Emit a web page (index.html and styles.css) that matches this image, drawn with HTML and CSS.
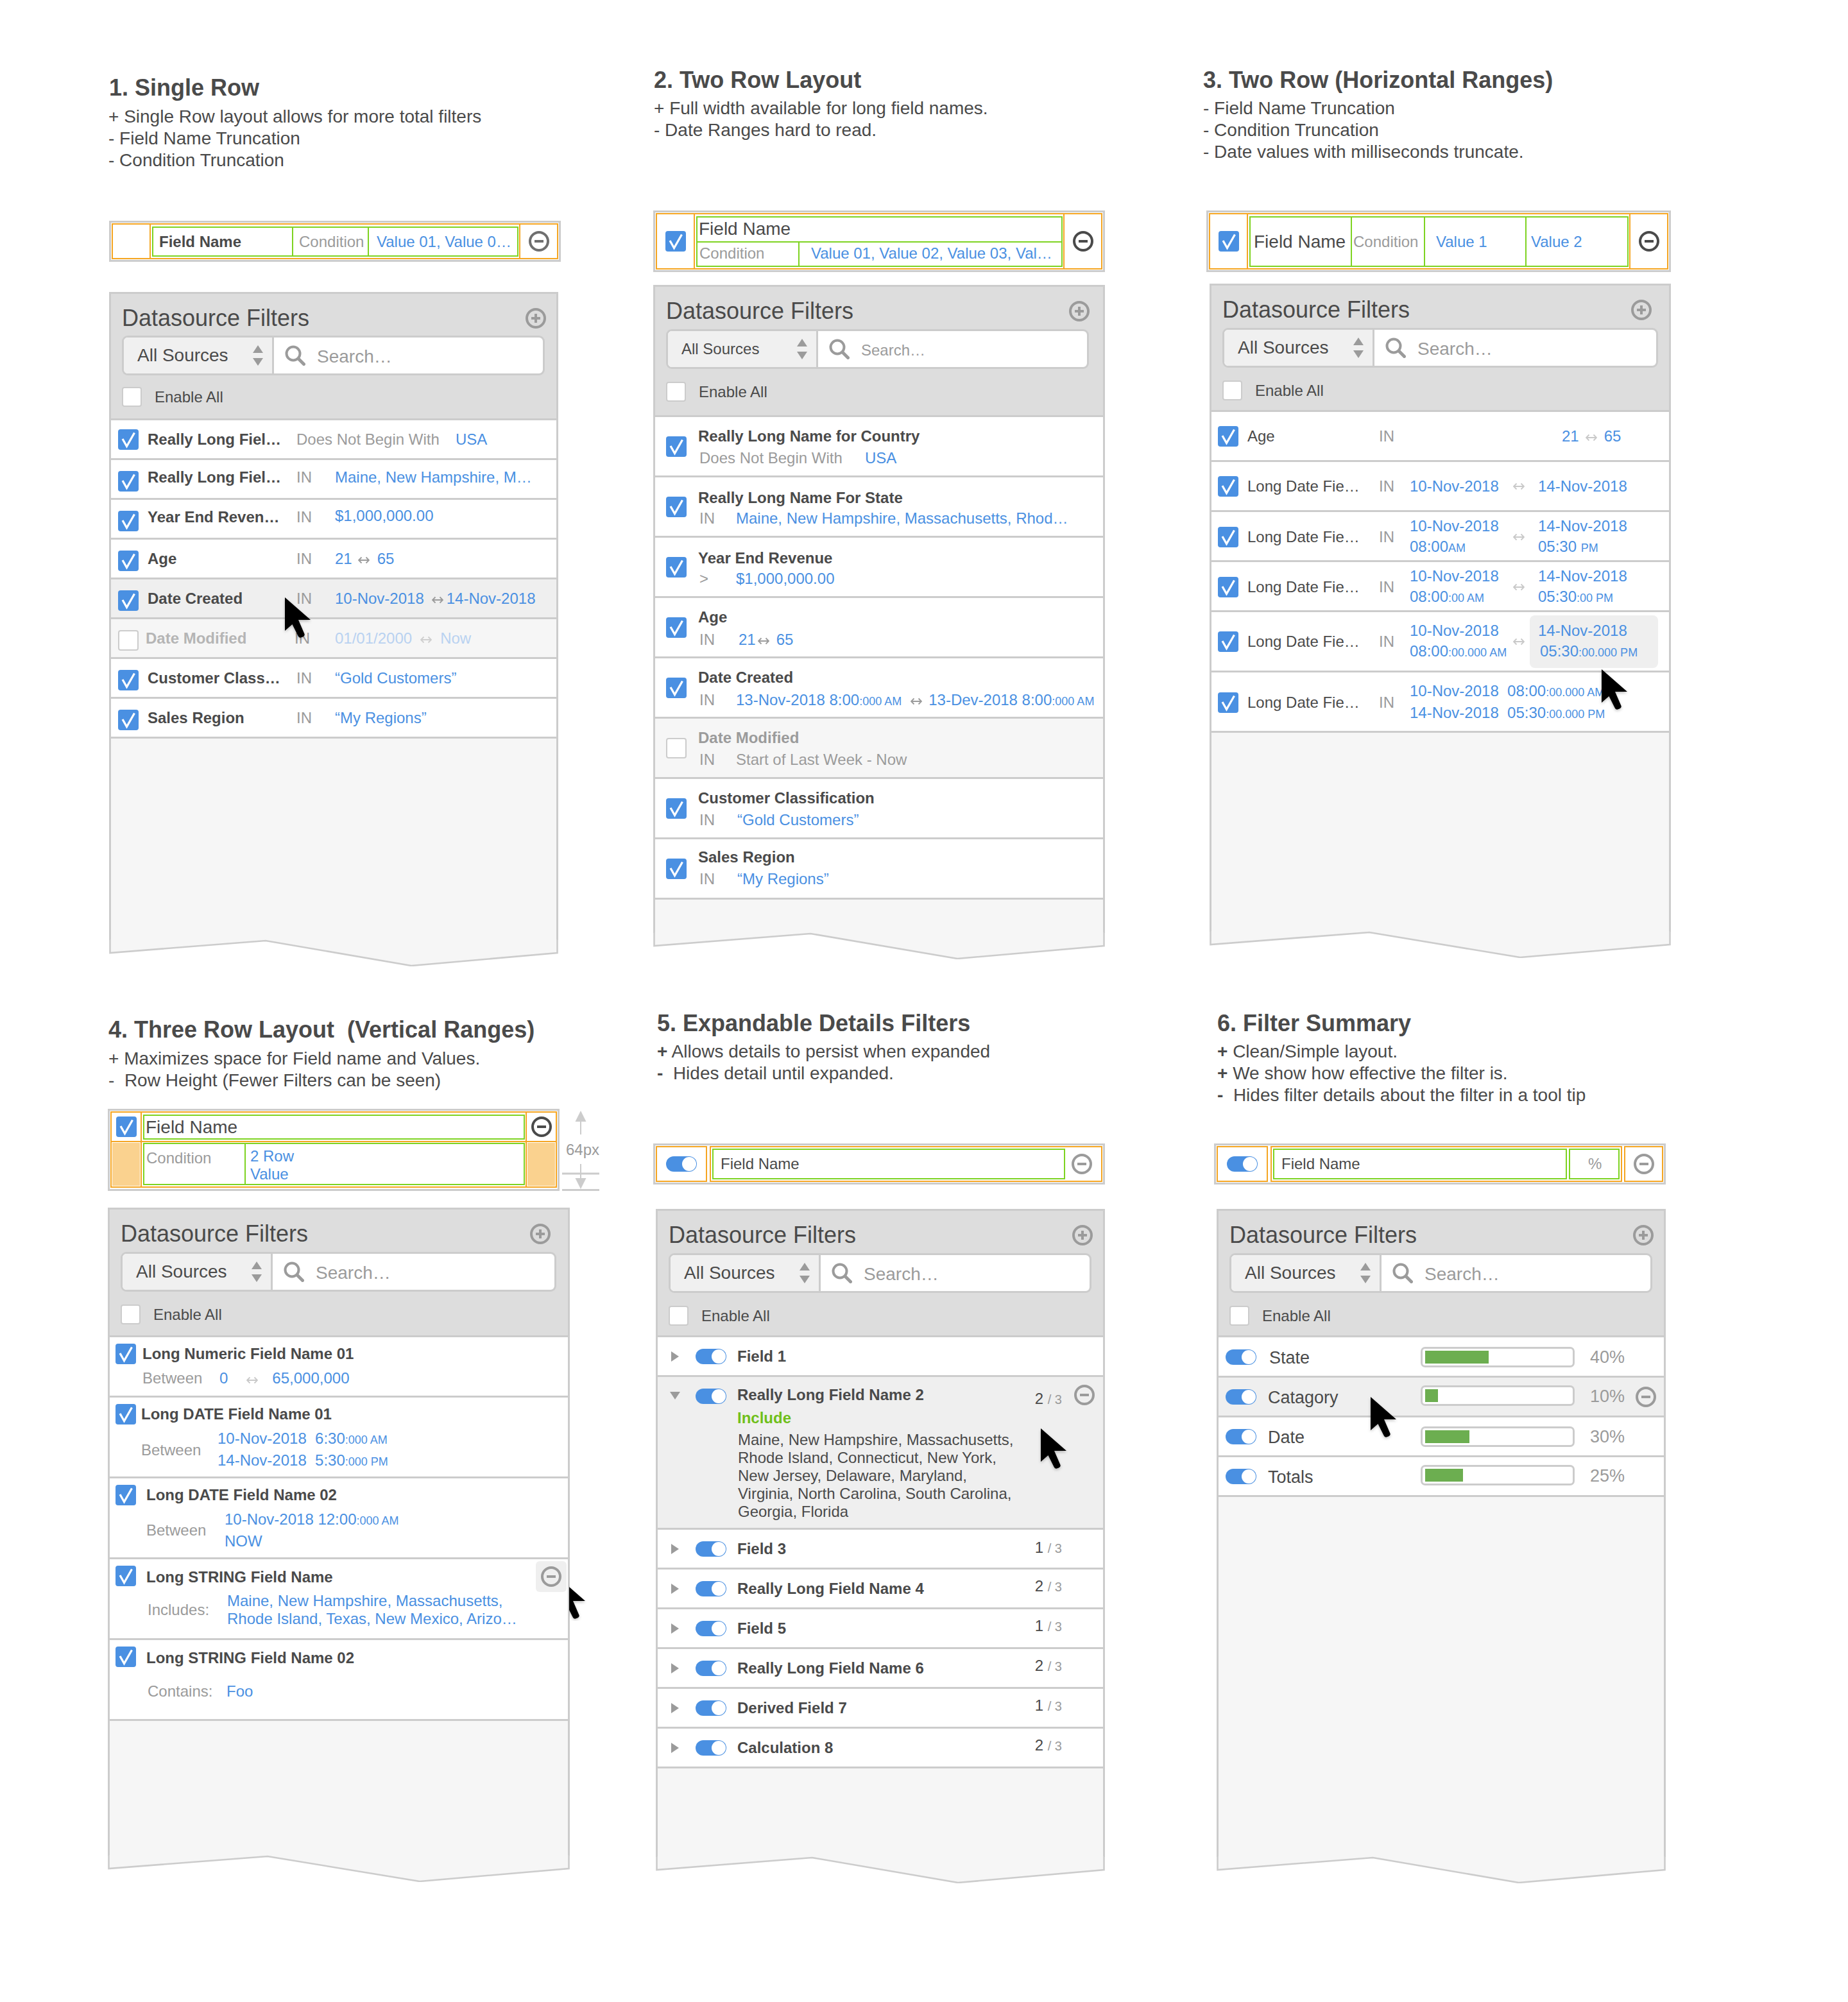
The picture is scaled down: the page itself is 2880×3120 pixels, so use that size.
FILE: index.html
```html
<!DOCTYPE html>
<html lang="en">
<head>
    <meta charset="UTF-8">
    <title>Datasource Filters - row layouts</title>
    <link rel="stylesheet" href="styles.css">
</head>
<body>

<svg class="defs" width="0" height="0">
    <symbol id="check" viewBox="0 0 32 32">
        <rect width="32" height="32" rx="4" fill="#4a90e2"/>
        <path d="M7 15 L13.5 26.5 L25.5 5.5" fill="none" stroke="#fff" stroke-width="3.2"/>
    </symbol>
    <symbol id="minus" viewBox="0 0 32 32">
        <circle cx="16" cy="16" r="14" fill="none" stroke="currentColor" stroke-width="4"/>
        <path d="M9 16 H23" stroke="currentColor" stroke-width="4"/>
    </symbol>
    <symbol id="plus" viewBox="0 0 32 32">
        <circle cx="16" cy="16" r="14" fill="none" stroke="currentColor" stroke-width="4"/>
        <path d="M9 16 H23 M16 9 V23" stroke="currentColor" stroke-width="4"/>
    </symbol>
    <symbol id="search" viewBox="0 0 32 32">
        <circle cx="13" cy="13" r="10.5" fill="none" stroke="#9b9b9b" stroke-width="4"/>
        <path d="M21 21 L29.5 29.5" stroke="#9b9b9b" stroke-width="5" stroke-linecap="round"/>
    </symbol>
    <symbol id="updown" viewBox="0 0 16 32">
        <path d="M8 0 L16 12 H0 Z M0 20 H16 L8 32 Z" fill="#9b9b9b"/>
    </symbol>
    <symbol id="arr" viewBox="0 0 18 12">
        <path d="M1 6 H17 M5.5 1.5 L1 6 L5.5 10.5 M12.5 1.5 L17 6 L12.5 10.5" fill="none" stroke="currentColor" stroke-width="1.8"/>
    </symbol>
    <symbol id="cursor" viewBox="0 0 42 66">
        <path d="M0 0 L40 35 L21 35 L30.5 57 Q31.5 60 28 61.5 L25 62.5 Q22 63.5 20.5 60 L11.5 42 L0 52 Z" fill="#000"/>
    </symbol>
</svg>

<main class="board">

    <!-- 1 -->
    <section class="mock s1">
        <div class="intro">
            <h2>1. Single Row</h2>
            <p class="notes">+ Single Row layout allows for more total filters<br>- Field Name Truncation<br>- Condition Truncation</p>
        </div>
        <div class="spec">
            <div class="cell c-side"></div>
            <div class="cell c-main">
                <div class="zone">
                    <div class="part pf1 strong">Field Name</div>
                    <div class="part pc1 grey">Condition</div>
                    <div class="part pv1 blue">Value 01, Value 0…</div>
                </div>
            </div>
            <div class="cell c-side c-end"><svg class="ic ic-mid"><use href="#minus"/></svg></div>
        </div>
        <div class="panel">
            <div class="head">
                <div class="head-top"><span class="title">Datasource Filters</span><svg class="ic ic-light"><use href="#plus"/></svg></div>
                <div class="ctl">
                    <div class="sel">All Sources<svg class="updown"><use href="#updown"/></svg></div>
                    <div class="find"><svg class="mag"><use href="#search"/></svg>Search…</div>
                </div>
                <div class="enable"><span class="box"></span>Enable All</div>
            </div>
            <div class="rows">
                <div class="row r1"><svg class="chk"><use href="#check"/></svg><b class="nm">Really Long Fiel…</b><span class="lbl wide">Does Not Begin With</span><span class="blue">USA</span></div>
                <div class="row r1 low"><svg class="chk"><use href="#check"/></svg><b class="nm lift">Really Long Fiel…</b><span class="lbl lift">IN</span><span class="blue lift">Maine, New Hampshire, M…</span></div>
                <div class="row r1 low"><svg class="chk"><use href="#check"/></svg><b class="nm lift">Year End Reven…</b><span class="lbl lift">IN</span><span class="blue lift2">$1,000,000.00</span></div>
                <div class="row r1 low"><svg class="chk"><use href="#check"/></svg><b class="nm">Age</b><span class="lbl">IN</span><span class="blue">21<svg class="arr arr-r1"><use href="#arr"/></svg>65</span></div>
                <div class="row r1 low hov"><svg class="chk"><use href="#check"/></svg><b class="nm">Date Created</b><span class="lbl">IN</span><span class="blue">10-Nov-2018<svg class="arr arr-tight"><use href="#arr"/></svg>14-Nov-2018</span></div>
                <div class="row r1 low off"><span class="box"></span><b class="nm nm-off">Date Modified</b><span class="lbl">IN</span><span class="faint">01/01/2000<svg class="arr"><use href="#arr"/></svg>Now</span></div>
                <div class="row r1 low"><svg class="chk"><use href="#check"/></svg><b class="nm">Customer Class…</b><span class="lbl">IN</span><span class="blue">“Gold Customers”</span></div>
                <div class="row r1 low"><svg class="chk"><use href="#check"/></svg><b class="nm">Sales Region</b><span class="lbl">IN</span><span class="blue">“My Regions”</span></div>
            </div>
            <svg class="tear" width="700" height="42"><path d="M1.5 0 V21 L244 2 L471 41 L698.5 21 V0" /></svg>
            <svg class="cur cur1"><use href="#cursor"/></svg>
        </div>
    </section>

    <!-- 2 -->
    <section class="mock s2">
        <div class="intro">
            <h2>2. Two Row Layout</h2>
            <p class="notes">+ Full width available for long field names.<br>- Date Ranges hard to read.</p>
        </div>
        <div class="spec">
            <div class="cell c-side"><svg class="chk"><use href="#check"/></svg></div>
            <div class="cell c-main">
                <div class="zone zone-col">
                    <div class="part pname">Field Name</div>
                    <div class="sub">
                        <div class="part pc2 grey">Condition</div>
                        <div class="part pv2 blue">Value 01, Value 02, Value 03, Val…</div>
                    </div>
                </div>
            </div>
            <div class="cell c-side c-end"><svg class="ic ic-dark"><use href="#minus"/></svg></div>
        </div>
        <div class="panel">
            <div class="head">
                <div class="head-top"><span class="title">Datasource Filters</span><svg class="ic ic-light"><use href="#plus"/></svg></div>
                <div class="ctl">
                    <div class="sel">All Sources<svg class="updown"><use href="#updown"/></svg></div>
                    <div class="find"><svg class="mag"><use href="#search"/></svg>Search…</div>
                </div>
                <div class="enable"><span class="box"></span>Enable All</div>
            </div>
            <div class="rows">
                <div class="row r2">
                    <svg class="chk"><use href="#check"/></svg>
                    <div class="stack"><b>Really Long Name for Country</b><div class="line"><span class="lbl wide">Does Not Begin With</span><span class="blue">USA</span></div></div>
                </div>
                <div class="row r2 name-lo">
                    <svg class="chk"><use href="#check"/></svg>
                    <div class="stack"><b>Really Long Name For State</b><div class="line"><span class="lbl">IN</span><span class="blue">Maine, New Hampshire, Massachusetts, Rhod…</span></div></div>
                </div>
                <div class="row r2 name-lo">
                    <svg class="chk"><use href="#check"/></svg>
                    <div class="stack"><b>Year End Revenue</b><div class="line"><span class="lbl">&gt;</span><span class="blue">$1,000,000.00</span></div></div>
                </div>
                <div class="row r2">
                    <svg class="chk"><use href="#check"/></svg>
                    <div class="stack"><b>Age</b><div class="line line-lo"><span class="lbl">IN</span><span class="blue in4">21<svg class="arr arr-close"><use href="#arr"/></svg>65</span></div></div>
                </div>
                <div class="row r2">
                    <svg class="chk"><use href="#check"/></svg>
                    <div class="stack"><b>Date Created</b><div class="line line-lo"><span class="lbl">IN</span><span class="blue">13-Nov-2018 8:00<small>:000 AM</small><svg class="arr arr-date"><use href="#arr"/></svg>13-Dev-2018 8:00<small>:000 AM</small></span></div></div>
                </div>
                <div class="row r2 off">
                    <span class="box"></span>
                    <div class="stack"><b class="nm-off2">Date Modified</b><div class="line"><span class="lbl">IN</span><span class="grey">Start of Last Week - Now</span></div></div>
                </div>
                <div class="row r2">
                    <svg class="chk"><use href="#check"/></svg>
                    <div class="stack"><b>Customer Classification</b><div class="line"><span class="lbl">IN</span><span class="blue in2">“Gold Customers”</span></div></div>
                </div>
                <div class="row r2 all-hi">
                    <svg class="chk"><use href="#check"/></svg>
                    <div class="stack"><b>Sales Region</b><div class="line"><span class="lbl">IN</span><span class="blue in2">“My Regions”</span></div></div>
                </div>
            </div>
            <svg class="tear" width="704" height="42"><path d="M1.5 0 V21 L245 2 L474 41 L702.5 21 V0" /></svg>
        </div>
    </section>

    <!-- 3 -->
    <section class="mock s3">
        <div class="intro">
            <h2>3. Two Row (Horizontal Ranges)</h2>
            <p class="notes">- Field Name Truncation<br>- Condition Truncation<br>- Date values with milliseconds truncate.</p>
        </div>
        <div class="spec">
            <div class="cell c-side"><svg class="chk"><use href="#check"/></svg></div>
            <div class="cell c-main">
                <div class="zone">
                    <div class="part pf3">Field Name</div>
                    <div class="part pc3 grey">Condition</div>
                    <div class="part pv3 blue">Value 1</div>
                    <div class="part pv3b blue">Value 2</div>
                </div>
            </div>
            <div class="cell c-side c-end"><svg class="ic ic-dark"><use href="#minus"/></svg></div>
        </div>
        <div class="panel">
            <div class="head">
                <div class="head-top"><span class="title">Datasource Filters</span><svg class="ic ic-light"><use href="#plus"/></svg></div>
                <div class="ctl">
                    <div class="sel">All Sources<svg class="updown"><use href="#updown"/></svg></div>
                    <div class="find"><svg class="mag"><use href="#search"/></svg>Search…</div>
                </div>
                <div class="enable"><span class="box"></span>Enable All</div>
            </div>
            <div class="rows">
                <div class="row r3"><svg class="chk"><use href="#check"/></svg><span class="nm">Age</span><span class="lbl">IN</span><span class="v1"></span><span class="gap gap-age blue">21<svg class="arr arr-age"><use href="#arr"/></svg>65</span></div>
                <div class="row r3"><svg class="chk"><use href="#check"/></svg><span class="nm">Long Date Fie…</span><span class="lbl">IN</span><span class="v1 blue">10-Nov-2018</span><svg class="arr"><use href="#arr"/></svg><span class="v2 blue">14-Nov-2018</span></div>
                <div class="row r3 dn"><svg class="chk"><use href="#check"/></svg><span class="nm">Long Date Fie…</span><span class="lbl">IN</span><span class="v1 blue">10-Nov-2018<br>08:00<small>AM</small></span><svg class="arr"><use href="#arr"/></svg><span class="v2 blue">14-Nov-2018<br>05:30 <small>PM</small></span></div>
                <div class="row r3 dn"><svg class="chk"><use href="#check"/></svg><span class="nm">Long Date Fie…</span><span class="lbl">IN</span><span class="v1 blue">10-Nov-2018<br>08:00<small>:00 AM</small></span><svg class="arr"><use href="#arr"/></svg><span class="v2 blue">14-Nov-2018<br>05:30<small>:00 PM</small></span></div>
                <div class="row r3 tall"><svg class="chk"><use href="#check"/></svg><span class="nm">Long Date Fie…</span><span class="lbl">IN</span><span class="v1 blue">10-Nov-2018<br>08:00<small>:00.000 AM</small></span><svg class="arr"><use href="#arr"/></svg><span class="v2 blue pick">14-Nov-2018<br><i>05:30<small>:00.000 PM</small></i></span></div>
                <div class="row r3 tall dn"><svg class="chk"><use href="#check"/></svg><span class="nm">Long Date Fie…</span><span class="lbl">IN</span><span class="blue">10-Nov-2018&nbsp; 08:00<small>:00.000 AM</small><br>14-Nov-2018&nbsp; 05:30<small>:00.000 PM</small></span></div>
            </div>
            <svg class="tear" width="719" height="42"><path d="M1.5 0 V21 L249 2 L484 41 L717.5 21 V0" /></svg>
            <svg class="cur cur3"><use href="#cursor"/></svg>
        </div>
    </section>

    <!-- 4 -->
    <section class="mock s4">
        <div class="intro">
            <h2>4. Three Row Layout&nbsp; (Vertical Ranges)</h2>
            <p class="notes">+ Maximizes space for Field name and Values.<br>-&nbsp; Row Height (Fewer Filters can be seen)</p>
        </div>
        <div class="spec-wrap">
            <div class="spec spec-rows">
                <div class="tier t-top">
                    <div class="cell c-side"><svg class="chk"><use href="#check"/></svg></div>
                    <div class="cell c-main"><div class="zone"><div class="part pname">Field Name</div></div></div>
                    <div class="cell c-side c-end"><svg class="ic ic-dark"><use href="#minus"/></svg></div>
                </div>
                <div class="tier t-bot">
                    <div class="cell c-side"><span class="peach"></span></div>
                    <div class="cell c-main">
                        <div class="zone">
                            <div class="part pc4 grey">Condition</div>
                            <div class="part pv4 blue">2 Row<br>Value</div>
                        </div>
                    </div>
                    <div class="cell c-side c-end"><span class="peach"></span></div>
                </div>
            </div>
            <div class="dim">
                <svg width="58" height="41"><path d="M29 3 L37.5 20 H20.5 Z" fill="#ccc"/><path d="M29 20 V40" stroke="#ccc" stroke-width="2"/></svg>
                <span class="dim-text">64px</span>
                <svg width="58" height="42"><path d="M29 0 V23" stroke="#ccc" stroke-width="2"/><path d="M29 39 L37.5 22 H20.5 Z" fill="#ccc"/><path d="M0 15 H58 M0 40.5 H58" stroke="#ccc" stroke-width="3"/></svg>
            </div>
        </div>
        <div class="panel">
            <div class="head">
                <div class="head-top"><span class="title">Datasource Filters</span><svg class="ic ic-light"><use href="#plus"/></svg></div>
                <div class="ctl">
                    <div class="sel">All Sources<svg class="updown"><use href="#updown"/></svg></div>
                    <div class="find"><svg class="mag"><use href="#search"/></svg>Search…</div>
                </div>
                <div class="enable"><span class="box"></span>Enable All</div>
            </div>
            <div class="rows">
                <div class="row r4 short">
                    <svg class="chk"><use href="#check"/></svg>
                    <div class="stack st-a"><b>Long Numeric Field Name 01</b><div class="detail"><span class="lbl">Between</span><span class="blue">0<svg class="arr arr-wide"><use href="#arr"/></svg>65,000,000</span></div></div>
                </div>
                <div class="row r4">
                    <svg class="chk"><use href="#check"/></svg>
                    <div class="stack st-b"><b>Long DATE Field Name 01</b><div class="detail"><span class="lbl">Between</span><span class="blue">10-Nov-2018&nbsp; 6:30<small>:000 AM</small><br>14-Nov-2018&nbsp; 5:30<small>:000 PM</small></span></div></div>
                </div>
                <div class="row r4">
                    <svg class="chk"><use href="#check"/></svg>
                    <div class="stack st-c"><b>Long DATE Field Name 02</b><div class="detail"><span class="lbl">Between</span><span class="blue">10-Nov-2018 12:00<small>:000 AM</small><br>NOW</span></div></div>
                </div>
                <div class="row r4">
                    <svg class="chk"><use href="#check"/></svg>
                    <div class="stack st-c deep"><b>Long STRING Field Name</b><div class="detail"><span class="lbl lbl-in">Includes:</span><span class="blue tight">Maine, New Hampshire, Massachusetts,<br>Rhode Island, Texas, New Mexico, Arizo…</span></div></div>
                    <span class="hover-btn"><svg class="ic ic-light"><use href="#minus"/></svg></span>
                </div>
                <div class="row r4">
                    <svg class="chk"><use href="#check"/></svg>
                    <div class="stack st-c deep"><b>Long STRING Field Name 02</b><div class="detail low-detail"><span class="lbl lbl-in">Contains:</span><span class="blue">Foo</span></div></div>
                </div>
            </div>
            <svg class="tear" width="720" height="42"><path d="M1.5 0 V21 L249 2 L486 41 L718.5 21 V0" /></svg>
            <svg class="cur cur4"><use href="#cursor"/></svg>
        </div>
    </section>

    <!-- 5 -->
    <section class="mock s5">
        <div class="intro">
            <h2>5. Expandable Details Filters</h2>
            <p class="notes"><b>+</b> Allows details to persist when expanded<br><b>-</b>&nbsp; Hides detail until expanded.</p>
        </div>
        <div class="spec spec-tog">
            <div class="cell c-tog"><span class="toggle"></span></div>
            <div class="cell c-rest">
                <div class="zone z-five"><div class="part ptog">Field Name</div></div>
                <svg class="ic ic-light"><use href="#minus"/></svg>
            </div>
        </div>
        <div class="panel">
            <div class="head">
                <div class="head-top"><span class="title">Datasource Filters</span><svg class="ic ic-light"><use href="#plus"/></svg></div>
                <div class="ctl">
                    <div class="sel">All Sources<svg class="updown"><use href="#updown"/></svg></div>
                    <div class="find"><svg class="mag"><use href="#search"/></svg>Search…</div>
                </div>
                <div class="enable"><span class="box"></span>Enable All</div>
            </div>
            <div class="rows">
                <div class="row r5"><span class="tri"></span><span class="toggle"></span><b class="nm5">Field 1</b></div>
                <div class="row r5 open">
                    <span class="tri tri-down"></span><span class="toggle"></span>
                    <div class="stack5">
                        <b class="nm5">Really Long Field Name 2</b>
                        <b class="incl">Include</b>
                        <p class="states">Maine, New Hampshire, Massachusetts,<br>Rhode Island, Connecticut, New York,<br>New Jersey, Delaware, Maryland,<br>Virginia, North Carolina, South Carolina,<br>Georgia, Florida</p>
                    </div>
                    <span class="count">2 <small>/ 3</small></span>
                    <svg class="ic ic-light"><use href="#minus"/></svg>
                </div>
                <div class="row r5 level"><span class="tri"></span><span class="toggle"></span><b class="nm5">Field 3</b><span class="count">1 <small>/ 3</small></span></div>
                <div class="row r5"><span class="tri"></span><span class="toggle"></span><b class="nm5">Really Long Field Name 4</b><span class="count">2 <small>/ 3</small></span></div>
                <div class="row r5"><span class="tri"></span><span class="toggle"></span><b class="nm5">Field 5</b><span class="count">1 <small>/ 3</small></span></div>
                <div class="row r5"><span class="tri"></span><span class="toggle"></span><b class="nm5">Really Long Field Name 6</b><span class="count">2 <small>/ 3</small></span></div>
                <div class="row r5"><span class="tri"></span><span class="toggle"></span><b class="nm5">Derived Field 7</b><span class="count">1 <small>/ 3</small></span></div>
                <div class="row r5"><span class="tri"></span><span class="toggle"></span><b class="nm5">Calculation 8</b><span class="count">2 <small>/ 3</small></span></div>
            </div>
            <svg class="tear" width="700" height="42"><path d="M1.5 0 V21 L243.5 2 L471 41 L698.5 21 V0" /></svg>
            <svg class="cur cur5"><use href="#cursor"/></svg>
        </div>
    </section>

    <!-- 6 -->
    <section class="mock s6">
        <div class="intro">
            <h2>6. Filter Summary</h2>
            <p class="notes"><b>+</b> Clean/Simple layout.<br><b>+</b> We show how effective the filter is.<br><b>-</b>&nbsp; Hides filter details about the filter in a tool tip</p>
        </div>
        <div class="spec spec-tog">
            <div class="cell c-tog"><span class="toggle"></span></div>
            <div class="cell c-six">
                <div class="zone z-six-a"><div class="part ptog">Field Name</div></div>
                <div class="zone z-six-b"><div class="part ppct grey">%</div></div>
            </div>
            <div class="cell c-six-end"><svg class="ic ic-light"><use href="#minus"/></svg></div>
        </div>
        <div class="panel">
            <div class="head">
                <div class="head-top"><span class="title">Datasource Filters</span><svg class="ic ic-light"><use href="#plus"/></svg></div>
                <div class="ctl">
                    <div class="sel">All Sources<svg class="updown"><use href="#updown"/></svg></div>
                    <div class="find"><svg class="mag"><use href="#search"/></svg>Search…</div>
                </div>
                <div class="enable"><span class="box"></span>Enable All</div>
            </div>
            <div class="rows">
                <div class="row r6"><span class="toggle"></span><span class="nm6">State</span><span class="bar"><i class="fill" style="width: 99px"></i></span><span class="pct">40%</span></div>
                <div class="row r6 hov"><span class="toggle"></span><span class="nm6 nudge">Catagory</span><span class="bar bar-up"><i class="fill" style="width: 20px"></i></span><span class="pct pct-level">10%</span><svg class="ic ic-light"><use href="#minus"/></svg></div>
                <div class="row r6"><span class="toggle"></span><span class="nm6 nudge">Date</span><span class="bar"><i class="fill" style="width: 69px"></i></span><span class="pct">30%</span></div>
                <div class="row r6"><span class="toggle"></span><span class="nm6 nudge">Totals</span><span class="bar bar-up"><i class="fill" style="width: 59px"></i></span><span class="pct pct-level">25%</span></div>
            </div>
            <svg class="tear" width="700" height="42"><path d="M1.5 0 V21 L243.5 2 L471 41 L698.5 21 V0" /></svg>
            <svg class="cur cur6"><use href="#cursor"/></svg>
        </div>
    </section>

</main>

</body>
</html>
```

FILE: styles.css
```css
* {
    box-sizing: border-box;
}

body {
    margin: 0;
    background: #fff;
    color: #4a4a4a;
    font-family: "Liberation Sans", Arial, sans-serif;
    font-size: 24px;
}

.defs {
    display: block;
    height: 0;
}

.board {
    display: grid;
    grid-template-columns: 1000px 860px 1020px;
    grid-template-rows: 1560px 1560px;
    width: 2880px;
    height: 3120px;
}

h2 {
    margin: 0;
    font-size: 36px;
    line-height: 44px;
}

.notes {
    margin: 5px 0 0;
    font-size: 28px;
    line-height: 34px;
}

.grey { color: #9b9b9b; }
.blue { color: #4a90e2; }
.faint { color: #b9d2f1; }
small { font-size: 18px; }

/* per-mock placement on the board */
.s1 { padding: 115px 0 0 170px; }
.s1 .intro { height: 229px; }
.s1 .notes { margin: 6px 0 0 -1px; }
.s1 .panel { margin-top: 47px; width: 700px; }

.s2 { padding: 103px 0 0 18px; }
.s2 .intro { height: 225px; margin-left: 1px; }
.s2 .panel { margin-top: 20px; width: 704px; }

.s3 { padding: 103px 0 0 15px; }
.s3 .intro { height: 225px; }
.s3 .spec { margin-left: 5px; width: 724px; }
.s3 .panel { margin: 18px 0 0 10px; width: 719px; }

.s4 { padding: 23px 0 0 168px; }
.s4 .intro { height: 145px; margin-left: 1px; }
.s4 .notes { margin-top: 6px; }
.s4 .panel { margin-top: 26px; width: 720px; }

.s5 { padding: 13px 0 0 24px; }
.s5 .intro { height: 209px; }
.s5 .spec { margin-left: -6px; }
.s5 .panel { margin: 38px 0 0 -2px; width: 700px; }

.s6 { padding: 13px 0 0 37px; }
.s6 .intro { height: 209px; }
.s6 .spec { margin-left: -5px; }
.s6 .panel { margin: 38px 0 0 -1px; width: 700px; }

/* annotated row specs */
.spec {
    display: flex;
    width: 704px;
    height: 64px;
    padding: 1px;
    border: 3px solid #ccc;
}

.s2 .spec,
.s3 .spec {
    height: 96px;
}

.cell {
    display: flex;
    align-items: center;
    border: 2px solid #f5a623;
}

.c-side {
    flex: 0 0 61px;
    justify-content: center;
}

.c-main {
    flex: 1;
    align-items: stretch;
    margin-left: -2px;
    padding: 3px 1px 2px 2px;
}

.c-end {
    margin-left: -2px;
}

.zone {
    display: flex;
    flex: 1;
    border: 2px solid #7ed321;
}

.zone-col {
    flex-direction: column;
}

.sub {
    display: flex;
    flex: 1;
    border-top: 2px solid #7ed321;
}

.part {
    display: flex;
    align-items: center;
    white-space: nowrap;
}

.part + .part {
    border-left: 2px solid #7ed321;
}

.pf1 { flex: 0 0 216px; padding-left: 9px; font-weight: bold; }
.pc1 { flex: 0 0 118px; padding-left: 9px; }
.pv1 { flex: 1; padding-left: 12px; }

.pname { padding-left: 2px; font-size: 28px; }
.s2 .pname { height: 37px; padding-bottom: 1px; }
.pc2 { flex: 0 0 157px; padding: 0 0 2px 3px; }
.pv2 { flex: 1; padding: 0 0 2px 18px; }
.sub .part + .part { border-left: 2px solid #7ed321; }

.pf3 { flex: 0 0 156px; padding-left: 5px; font-size: 28px; }
.pc3 { flex: 0 0 114px; padding-left: 2px; }
.pv3 { flex: 0 0 158px; padding-left: 17px; }
.pv3b { flex: 1; padding-left: 7px; }

.spec-rows {
    flex-direction: column;
    height: 128px;
}

.s4 .tier {
    display: flex;
}

.t-top { height: 48px; }
.t-bot { height: 73px; margin-top: -2px; }
.s4 .c-side { flex: 0 0 49px; }
.peach {
    align-self: stretch;
    flex: 1;
    margin: 1px;
    background: #fad28f;
}
.t-bot .c-main { padding-top: 1px; }
.pc4 {
    flex: 0 0 156px;
    align-items: flex-start;
    padding: 8px 0 0 3px;
}
.pv4 {
    flex: 1;
    padding: 3px 0 0 7px;
    line-height: 28px;
    white-space: normal;
}
.s4 .pname { flex: 1; }

.spec-wrap {
    display: flex;
}

.dim {
    display: flex;
    flex-direction: column;
    width: 58px;
    margin-left: 4px;
}

.dim svg {
    display: block;
    flex: none;
}

.dim-text {
    display: flex;
    align-items: center;
    height: 45px;
    padding-left: 6px;
    color: #9b9b9b;
}

.spec-tog {
    height: 64px;
}

.c-tog {
    flex: 0 0 80px;
    justify-content: center;
}

.c-rest {
    flex: 1;
    align-items: stretch;
    margin-left: 4px;
    padding: 2px 0 2px 2px;
}

.c-rest .ic {
    align-self: center;
    margin-left: 10px;
}

.z-five {
    flex: 0 0 550px;
}

.ptog {
    padding-left: 11px;
}

.c-six {
    flex: 0 0 548px;
    align-items: stretch;
    gap: 3px;
    margin-left: 4px;
    padding: 2px;
}

.z-six-a { flex: 0 0 458px; }
.z-six-b { flex: 1; }
.ppct { padding-left: 28px; }

.c-six-end {
    flex: 1;
    justify-content: center;
    margin-left: 3px;
}

/* panels */
.panel {
    position: relative;
    display: flex;
    flex-direction: column;
    height: 1051px;
}

.head {
    flex: none;
    height: 200px;
    padding: 14px 16px 0 17px;
    border: 3px solid #ccc;
    background: #ddd;
}

.s2 .head { height: 206px; }
.s4 .head { height: 202px; }
.s1 .head-top { height: 51px; }
.s1 .enable { margin-top: 18px; }

.head-top {
    display: flex;
    align-items: flex-start;
    justify-content: space-between;
    height: 52px;
}

.head-top .ic {
    margin-top: 8px;
}

.s3 .head-top,
.s4 .head-top {
    padding-right: 11px;
}

.s2 .head-top {
    padding-right: 5px;
}

.title {
    padding-top: 2px;
    font-size: 36px;
    line-height: 44px;
}

.ctl {
    display: flex;
    width: 659px;
    height: 62px;
    overflow: hidden;
    border: 3px solid #ccc;
    border-radius: 9px;
    background: #fff;
    font-size: 28px;
}

.s3 .ctl,
.s4 .ctl {
    width: 679px;
}

.s2 .ctl {
    font-size: 24px;
}

.sel {
    display: flex;
    flex: 0 0 234px;
    align-items: center;
    padding-left: 21px;
    border-right: 3px solid #ccc;
    background: #f0f0f0;
}

.updown {
    flex: none;
    width: 16px;
    height: 32px;
    margin: 0 14px 0 auto;
}

.find {
    display: flex;
    align-items: center;
    padding: 3px 0 0 17px;
    color: #9b9b9b;
}

.mag {
    width: 32px;
    height: 32px;
    margin: -3px 18px 0 0;
}

.enable {
    display: flex;
    align-items: center;
    gap: 20px;
    margin-top: 20px;
    padding-left: 2px;
}

.box {
    flex: none;
    width: 32px;
    height: 32px;
    border: 2px solid #ccc;
    border-radius: 4px;
    background: #fff;
}

.enable .box {
    width: 31px;
    height: 31px;
    margin-left: -2px;
}

.chk {
    display: block;
    flex: none;
    width: 32px;
    height: 32px;
}

.ic {
    display: block;
    flex: none;
    width: 32px;
    height: 32px;
}

.ic-dark { color: #4a4a4a; }
.ic-mid { color: #6f6f6f; }
.ic-light { color: #9b9b9b; }

.rows {
    flex: 1;
    border-right: 3px solid #ccc;
    border-left: 3px solid #ccc;
    background: #f6f6f6;
}

.row {
    position: relative;
    display: flex;
    align-items: center;
    border-bottom: 3px solid #ccc;
    background: #fff;
}

.hov { background: #efefef; }
.off { background: #f6f6f6; }

.tear {
    display: block;
    flex: none;
    margin-top: -1px;
}

.tear path {
    fill: #f6f6f6;
    stroke: #ccc;
    stroke-width: 2.6;
}

.arr {
    display: inline-block;
    width: 18px;
    height: 12px;
    margin: 0 13px;
    color: #9b9b9b;
    vertical-align: 0;
}

.cur {
    position: absolute;
    width: 42px;
    height: 66px;
    filter: drop-shadow(0 2px 2px rgba(0, 0, 0, .25));
}

.cur1 { left: 274px; top: 476px; }
.cur3 { left: 611px; top: 601px; }
.cur4 { left: 704px; top: 578px; clip-path: inset(0 0 0 15px); }
.cur5 { left: 600px; top: 342px; }
.cur6 { left: 240px; top: 293px; }

/* 1: one line rows */
.r1 {
    height: 62px;
    padding-left: 11px;
}

.r1 .nm {
    flex: 0 0 232px;
    margin-left: 14px;
    white-space: nowrap;
}

.r1 .lbl {
    flex: 0 0 60px;
    color: #9b9b9b;
}

.r1 .wide { flex: 0 0 248px; }
.r1.low .chk,
.r1.low .box { margin-top: 7px; }
.lift { margin-top: -5px; }
.lift2 { margin-top: -9px; }
.arr-r1 { margin: 0 12px 0 9px; }
.arr-tight { margin: 0 5px 0 12px; }
.off .nm-off { margin-left: 11px; flex-basis: 232px; color: #b5b5b5; }
.off .faint { margin-left: 3px; }
.off .arr { color: #cfcfcf; }

/* 2: two line rows */
.r2 {
    align-items: center;
    height: 94px;
    padding-left: 17px;
}

.stack {
    align-self: flex-start;
    padding: 16px 0 0 18px;
    white-space: nowrap;
}

.stack b {
    display: block;
    line-height: 28px;
}

.name-lo .stack b { margin-top: 2px; }
.name-lo .line { margin-top: 1px; }
.line-lo { padding-top: 1px; }
.all-hi .stack { padding-top: 14px; }

.line {
    display: flex;
    margin-top: 3px;
    line-height: 34px;
}

.line .lbl {
    flex: 0 0 59px;
    padding-left: 2px;
    color: #9b9b9b;
}

.line .wide { flex: 0 0 260px; }
.in4 { margin-left: 4px; }
.in2 { margin-left: 2px; }
.arr-close { margin: 0 11px 0 3px; }
.arr-date { margin: 0 10px 0 14px; }
.nm-off2 { color: #9b9b9b; }

/* 3: horizontal ranges */
.r3 {
    height: 78px;
    padding-left: 10px;
    line-height: 32px;
}

.tall { height: 94px; }
.dn { padding-top: 3px; }

.r3 .nm {
    flex: 0 0 205px;
    margin-left: 14px;
    white-space: nowrap;
}

.r3 .lbl {
    flex: 0 0 48px;
    color: #9b9b9b;
}

.r3 .v1 { flex: 0 0 161px; white-space: nowrap; }
.r3 .arr { flex: none; margin: 0 21px 0 0; color: #c9c9c9; }
.r3 .v2 { flex: none; white-space: nowrap; }
.gap-age { margin-left: 76px; }
.r3 .arr-age { margin: 0 11px 0 10px; vertical-align: 0; }
.pick {
    width: 200px;
    margin-left: -13px;
    padding: 8px 0 8px 13px;
    border-radius: 8px;
    background: #efefef;
}
.pick i { margin-left: 3px; font-style: normal; }
.r3 .blue { white-space: nowrap; }

/* 4: vertical ranges */
.r4 {
    align-items: flex-start;
    height: 126px;
    padding: 10px 0 0 9px;
}

.short { height: 94px; }

.r4 .stack { padding: 2px 0 0 0; }
.st-a { margin-left: 10px; }
.st-b { margin-left: 8px; }
.st-c { margin-left: 16px; }
.r4 .deep { padding-top: 4px; }

.detail {
    display: flex;
    align-items: center;
    margin-top: 8px;
    line-height: 32px;
}

.detail .lbl {
    flex: 0 0 119px;
    color: #9b9b9b;
}

.st-a .lbl { flex-basis: 120px; }
.st-c .lbl { flex-basis: 122px; }
.st-c .lbl-in { flex-basis: 123px; margin-left: 2px; }
.deep .detail { margin-top: 9px; }
.tight { line-height: 28px; margin-left: 1px; }
.deep .low-detail { margin-top: 22px; }
.arr-wide { margin: 0 22px 0 29px; color: #c9c9c9; }
.r4 .detail .arr { vertical-align: -1px; }

.hover-btn {
    position: absolute;
    top: 3px;
    right: 2px;
    display: flex;
    align-items: center;
    justify-content: center;
    width: 48px;
    height: 48px;
    border-radius: 6px;
    background: #efefef;
}

/* 5: expandable rows */
.r5 {
    height: 62px;
    padding-left: 21px;
}

.tri {
    flex: none;
    width: 0;
    height: 0;
    margin-right: 26px;
    border-top: 8px solid transparent;
    border-bottom: 8px solid transparent;
    border-left: 12px solid #9b9b9b;
}

.tri-down {
    margin: 23px 24px 0 -2px;
    border-top: 12px solid #9b9b9b;
    border-right: 8px solid transparent;
    border-bottom: 0;
    border-left: 8px solid transparent;
}

.toggle {
    display: flex;
    flex: none;
    justify-content: flex-end;
    width: 48px;
    height: 24px;
    padding: 1px;
    border-radius: 12px;
    background: #4a90e2;
}

.toggle::after {
    content: "";
    width: 22px;
    height: 22px;
    border-radius: 50%;
    background: #fff;
}

.nm5 {
    margin-left: 17px;
    white-space: nowrap;
}

.count {
    margin: 0 64px 8px auto;
    white-space: nowrap;
}

.level .count { margin-bottom: 3px; }
.count small { font-size: 20px; color: #9b9b9b; }

.open {
    align-items: flex-start;
    height: 238px;
    background: #efefef;
}

.open .toggle { margin-top: 18px; }

.stack5 {
    display: flex;
    flex-direction: column;
    padding-top: 14px;
}

.stack5 b { line-height: 28px; }
.incl { margin: 8px 0 0 17px; color: #6fbf1a; }

.states {
    margin: 6px 0 0 18px;
    line-height: 28px;
    white-space: nowrap;
}

.open .count { margin: 20px 19px 0 auto; }
.open .ic { margin: 12px 13px 0 0; }

/* 6: summary rows */
.head + .rows .r6:first-child { margin-top: 1px; }

.r6 {
    height: 62px;
    padding-left: 11px;
}

.nm6 {
    flex: 0 0 236px;
    margin-left: 20px;
    padding-top: 3px;
    font-size: 27px;
}

.nm6.nudge {
    margin-left: 18px;
    flex-basis: 238px;
}

.bar {
    display: flex;
    flex: 0 0 240px;
    height: 32px;
    padding: 3px 0 3px 4px;
    border: 3px solid #ccc;
    border-radius: 7px;
    background: #fff;
}

.bar-up { margin-top: -4px; }

.fill {
    display: block;
    height: 100%;
    background: #6cae50;
}

.pct {
    flex: 0 0 95px;
    padding: 2px 0 0 24px;
    color: #9b9b9b;
    font-size: 27px;
}

.pct-level { padding-top: 0; }
```
